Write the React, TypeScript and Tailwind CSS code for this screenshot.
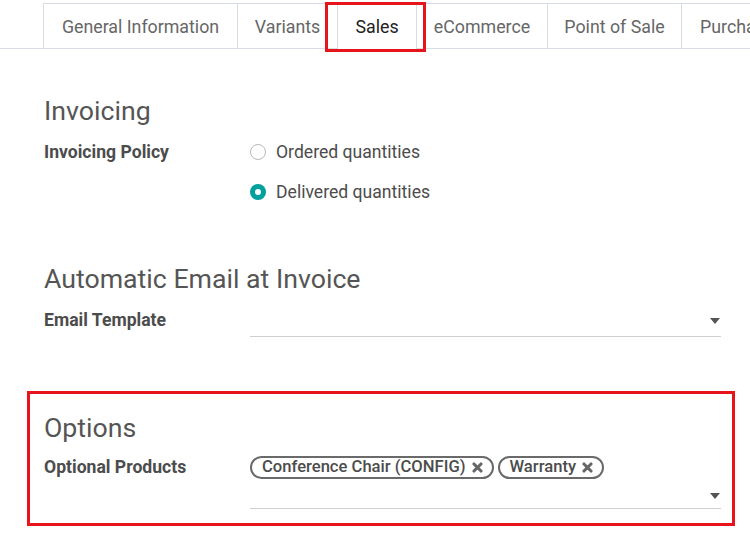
import React from "react";

const tabs = [
  { label: "General Information", w: "w-[194px] justify-center" },
  { label: "Variants", w: "w-[100px] justify-center" },
  { label: "Sales", w: "w-[79px] justify-center", active: true },
  { label: "eCommerce", w: "w-[131px] justify-center" },
  { label: "Point of Sale", w: "w-[134px] justify-center" },
  { label: "Purchase", w: "w-[140px] justify-start pl-[18px]" },
];

function Caret() {
  return (
    <svg width="10" height="6" viewBox="0 0 10 6" className="block">
      <path d="M0 0 L10 0 L5 6 Z" fill="#555" />
    </svg>
  );
}

function XIcon() {
  return (
    <svg width="11" height="11" viewBox="0 0 10 10" className="block">
      <path d="M1.8 1.8 L8.2 8.2 M8.2 1.8 L1.8 8.2" stroke="#666" strokeWidth="2.8" strokeLinecap="round" />
    </svg>
  );
}

function Tag({ label }: { label: string }) {
  return (
    <div className="flex items-center h-[23px] border-2 border-[#6a6a6a] rounded-full pl-[10px] pr-[9px] gap-[6px] text-[16.6px] font-medium text-[#4c4c4c] leading-none">
      <span>{label}</span>
      <XIcon />
    </div>
  );
}

export default function App() {
  return (
    <div className="w-[750px] h-[542px] bg-white overflow-hidden relative" style={{ fontFamily: "Roboto, 'Liberation Sans', sans-serif" }}>
      {/* Tab bar */}
      <div className="pt-[3px] border-b border-[#d8dde3] flex pl-[43px] whitespace-nowrap">
        {tabs.map((t) => (
          <div
            key={t.label}
            className={`${t.w} shrink-0 h-[45px] pt-[2px] border-t border-l border-[#d8dde3] flex items-center text-[17.8px] ${
              t.active ? "text-[#222] bg-white -mb-px h-[46px]" : "text-[#666]"
            }`}
          >
            {t.label}
          </div>
        ))}
      </div>

      {/* Red annotation around Sales tab */}
      <div className="absolute left-[325px] top-[2px] w-[101px] h-[50px] border-[3px] border-[#e8141c]" />

      <div className="pl-[27px] pr-[15px]">
        {/* Invoicing */}
        <div className="pl-[17px] pr-[14px]">
          <div className="mt-[46px] text-[26.7px] leading-[32px] text-[#555]">Invoicing</div>
          <div className="mt-[13px] flex">
            <div className="w-[206px] shrink-0 text-[17.6px] leading-[24px] font-bold text-[#4c4c4c]">Invoicing Policy</div>
            <div className="flex flex-col gap-[16px]">
              <div className="flex items-center h-[24px] gap-[10px] text-[17.6px] text-[#4c4c4c]">
                <div className="w-[16px] h-[16px] rounded-full border border-[#b5b9bd] bg-white" />
                <span>Ordered quantities</span>
              </div>
              <div className="flex items-center h-[24px] gap-[10px] text-[17.6px] text-[#4c4c4c]">
                <div className="w-[16px] h-[16px] rounded-full bg-[#00a09d] flex items-center justify-center">
                  <div className="w-[6px] h-[6px] rounded-full bg-white" />
                </div>
                <span>Delivered quantities</span>
              </div>
            </div>
          </div>

          {/* Automatic Email */}
          <div className="mt-[59px] text-[26.7px] leading-[32px] text-[#555]">Automatic Email at Invoice</div>
          <div className="mt-[13px] flex items-start">
            <div className="w-[206px] shrink-0 text-[17.6px] leading-[24px] font-bold text-[#4c4c4c]">Email Template</div>
            <div className="flex-1 h-[29px] border-b border-[#cfcfcf] flex items-start justify-end pt-[10px] pr-[1px]">
              <Caret />
            </div>
          </div>
        </div>

        {/* Options (annotated) */}
        <div className="mt-[54px] border-[3px] border-[#e8141c] pl-[14px] pr-[11px] pt-[18px] pb-[14px]">
          <div className="text-[26.7px] leading-[32px] text-[#555]">Options</div>
          <div className="mt-[11px] flex items-start">
            <div className="w-[206px] shrink-0 text-[17.6px] leading-[24px] font-bold text-[#4c4c4c]">Optional Products</div>
            <div className="flex-1 border-b border-[#cfcfcf] pt-[1px] h-[54px] flex flex-col">
              <div className="flex gap-[4px]">
                <Tag label="Conference Chair (CONFIG)" />
                <Tag label="Warranty" />
              </div>
              <div className="flex justify-end mt-[14px] pr-[1px]">
                <Caret />
              </div>
            </div>
          </div>
        </div>
      </div>
    </div>
  );
}
